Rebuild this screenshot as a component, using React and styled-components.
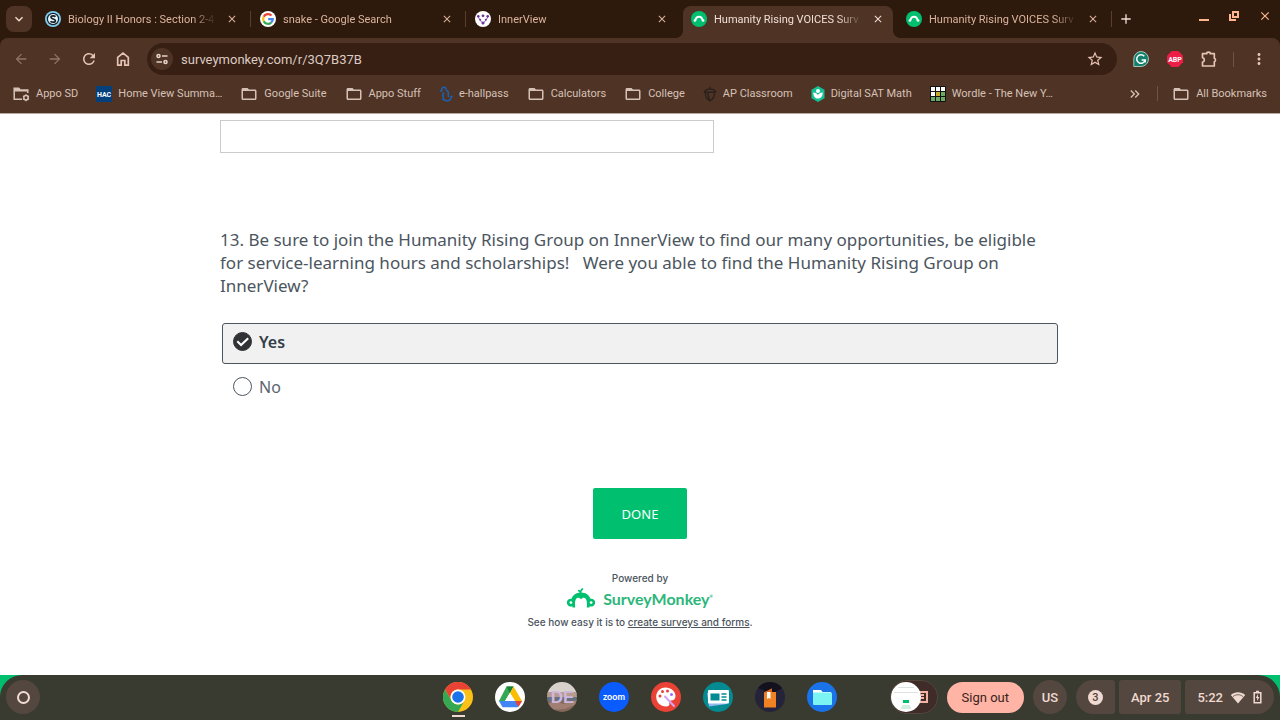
import React, { useState } from 'react';
import styled, { createGlobalStyle, css } from 'styled-components';
import {
  MdArrowBack,
  MdArrowForward,
  MdRefresh,
  MdStarBorder,
  MdMoreVert,
  MdAdd,
  MdClose,
  MdFolderOpen,
  MdKeyboardArrowDown,
  MdKeyboardDoubleArrowRight,
} from 'react-icons/md';

const tabs = [
  { id: 'bio', title: 'Biology II Honors : Section 2-4', icon: SchoologyIcon },
  { id: 'snake', title: 'snake - Google Search', icon: GoogleIcon },
  { id: 'inner', title: 'InnerView', icon: InnerViewIcon },
  { id: 'survey1', title: 'Humanity Rising VOICES Surv', icon: SurveyIcon },
  { id: 'survey2', title: 'Humanity Rising VOICES Surv', icon: SurveyIcon },
];

const bookmarks = [
  { title: 'Appo SD', icon: ManagedFolderIcon },
  { title: 'Home View Summa…', icon: HacIcon },
  { title: 'Google Suite', icon: MdFolderOpen },
  { title: 'Appo Stuff', icon: MdFolderOpen },
  { title: 'e-hallpass', icon: HallpassIcon },
  { title: 'Calculators', icon: MdFolderOpen },
  { title: 'College', icon: MdFolderOpen },
  { title: 'AP Classroom', icon: AcornIcon },
  { title: 'Digital SAT Math', icon: KhanIcon },
  { title: 'Wordle - The New Y…', icon: WordleIcon },
];

const shelfApps = [
  { name: 'Chrome', icon: ChromeApp, running: true },
  { name: 'Drive', icon: DriveApp },
  { name: 'Desmos', icon: DeApp },
  { name: 'Zoom', icon: ZoomApp },
  { name: 'Canvas', icon: PaintApp },
  { name: 'News', icon: NewsApp },
  { name: 'Reader', icon: BookApp },
  { name: 'Files', icon: FilesApp },
];

/* ---------- favicons ---------- */

function SchoologyIcon() {
  return (
    <svg width="16" height="16" viewBox="0 0 16 16">
      <circle cx="8" cy="8" r="8" fill="#7fcdee" />
      <circle cx="8" cy="8" r="6.2" fill="#16222b" />
      <circle cx="8" cy="8" r="5" fill="#e9f6fc" />
      <path d="M10.4 5.700C9.800 4.700 6 4.400 6 6.300c0 2 4.400 1.300 4.400 3.400 0 2-4 1.800-4.800.4" fill="none" stroke="#16222b" strokeWidth="1.700" />
    </svg>
  );
}

function GoogleIcon() {
  return (
    <svg width="16" height="16" viewBox="0 0 16 16">
      <circle cx="8" cy="8" r="8" fill="#fff" />
      <g fill="none" strokeWidth="2.200">
        <path d="M11.500 4.600A4.800 4.800 0 0 0 3.700 5.800" stroke="#ea4335" />
        <path d="M3.700 5.800a4.800 4.800 0 0 0 0 4.400" stroke="#fbbc05" />
        <path d="M3.700 10.200a4.800 4.800 0 0 0 7.500 1.400" stroke="#34a853" />
        <path d="M11.200 11.600A4.600 4.600 0 0 0 12.800 8.100H8.200" stroke="#4285f4" />
      </g>
    </svg>
  );
}

function InnerViewIcon() {
  return (
    <svg width="16" height="16" viewBox="0 0 16 16">
      <circle cx="8" cy="8" r="8" fill="#fff" />
      <path d="M3.300 5.600c0 2.500 2 2.300 2.300 3.600M12.700 5.600c0 2.500-2 2.300-2.300 3.600M5 9.300l3 3 3-3" fill="none" stroke="#8a55ba" strokeWidth="1" />
      <g fill="#6b2fa0">
        <circle cx="8" cy="4.800" r="1.400" />
        <circle cx="3.300" cy="5.300" r="1.300" />
        <circle cx="12.700" cy="5.300" r="1.300" />
        <circle cx="5.200" cy="8.700" r="1" />
        <circle cx="10.800" cy="8.700" r="1" />
        <circle cx="8" cy="12" r="1.500" />
      </g>
    </svg>
  );
}

function SurveyIcon() {
  return (
    <svg width="16" height="16" viewBox="0 0 16 16">
      <circle cx="8" cy="8" r="8" fill="#00bf6f" />
      <path d="M4.500 9.500C4.700 6.800 6.200 5.700 8 5.700s3.300 1.100 3.500 3.800" fill="none" stroke="#fff" strokeWidth="2" />
      <circle cx="3.900" cy="9.500" r="1.300" fill="#fff" />
      <circle cx="12.100" cy="9.500" r="1.300" fill="#fff" />
    </svg>
  );
}

function ManagedFolderIcon() {
  return (
    <svg width="17" height="16" viewBox="0 0 17 16">
      <path d="M9 13.200H1.200V2.200h4.500l1.500 1.800h7.600v3" fill="none" stroke="currentColor" strokeWidth="1.500" />
      <path d="M1 2h5l1.500 2H15v1.500H1z" fill="currentColor" />
      <circle cx="13" cy="11.700" r="2.200" fill="none" stroke="currentColor" strokeWidth="1.500" />
      <path d="M13 8.200v1.500M13 13.700v1.500M10 10l1.300.7M14.700 12.700l1.300.7M16 10l-1.300.7M11.300 12.700l-1.300.7" stroke="currentColor" strokeWidth="1.200" />
    </svg>
  );
}

function HacIcon() {
  return (
    <svg width="16" height="16" viewBox="0 0 16 16">
      <rect width="16" height="16" rx="1" fill="#04407c" />
      <text x="8" y="10.500" fill="#fff" fontFamily="Roboto, sans-serif" fontSize="7" fontWeight="700" textAnchor="middle">HAC</text>
    </svg>
  );
}

function HallpassIcon() {
  return (
    <svg width="14" height="16" viewBox="0 0 14 16">
      <path d="M.8 5h2.400M3 5C2.200 2.500 3.500 1.200 5 1.200c1.700 0 2.500 1.500 2 3M5 6.500c-1.500 1.500-1.500 3-.8 4.500.5 1.200-.2 2-.2 2 1 1.500 2.500 1.800 4.500 1.700M7 4.200c2 1 3 2.300 2.300 4-.5 1.300-.2 2.300.7 3M8.500 14.700c2.500 0 4-1.700 3.500-4.200M13.600 10.500h-2.200" fill="none" stroke="#1b62b5" strokeWidth="1.500" />
    </svg>
  );
}

function AcornIcon() {
  return (
    <svg width="14" height="16" viewBox="0 0 14 16">
      <path d="M7 3V.8M1 6.200C2.500 3.200 5 3 7 3s4.500.2 6 3.200M1 6.200h12M2.500 6.500C2.200 11 4.500 13.500 7 15c2.500-1.500 4.800-4 4.500-8.500M5 6.500c0 3 .5 5 2 7.500" fill="none" stroke="#2b211c" strokeWidth="1.400" />
    </svg>
  );
}

function KhanIcon() {
  return (
    <svg width="14" height="16" viewBox="0 0 14 16">
      <path d="M7 0l6.500 3.700v8.600L7 16 .5 12.300V3.700z" fill="#14bf96" />
      <circle cx="7" cy="5" r="2" fill="#fff" />
      <path d="M2.300 6.500C5 6.500 7 8 7 9.500c0-1.500 2-3 4.700-3 0 4-2 6-4.700 6s-4.700-2-4.700-6z" fill="#fff" />
    </svg>
  );
}

function WordleIcon() {
  const cells = ['#fff', '#fff', '#fff', '#fff', '#c9a92c', '#6aaa64', '#6aaa64', '#6aaa64', '#6aaa64'];
  return (
    <svg width="16" height="16" viewBox="0 0 16 16">
      <rect width="16" height="16" rx="1" fill="#121213" />
      {cells.map((fill, i) => (
        <rect key={i} x={1 + (i % 3) * 5} y={1 + Math.floor(i / 3) * 5} width="4" height="4" fill={fill} />
      ))}
    </svg>
  );
}

/* ---------- toolbar icons ---------- */

function HomeIcon() {
  return (
    <svg width="16" height="16" viewBox="0 0 16 16" fill="none" stroke="currentColor" strokeWidth="1.700">
      <path d="M2.700 14.200V6.300L8 2l5.300 4.300v7.900H9.800V9.500H6.200v4.700z" />
    </svg>
  );
}

function TuneIcon() {
  return (
    <svg width="14" height="14" viewBox="0 0 14 14" fill="none" stroke="currentColor" strokeWidth="1.600">
      <circle cx="3.500" cy="4" r="1.500" />
      <path d="M7 4h5.500M1.500 10h5.500" />
      <circle cx="10.500" cy="10" r="1.500" />
    </svg>
  );
}

function GrammarlyIcon() {
  return (
    <svg width="16" height="16" viewBox="0 0 16 16">
      <path d="M8 .5a7.500 7.500 0 1 1 0 15H.8V8A7.400 7.400 0 0 1 8 .5z" fill="#12806a" stroke="#c8dcd5" strokeWidth=".8" />
      <path d="M11.300 5.200A4.300 4.300 0 1 0 12.200 9H8.600M12.200 8.800v2.600" fill="none" stroke="#fff" strokeWidth="1.500" />
    </svg>
  );
}

function AbpIcon() {
  return (
    <svg width="16" height="16" viewBox="0 0 16 16">
      <path d="M4.700 0h6.600L16 4.700v6.600L11.300 16H4.700L0 11.300V4.700z" fill="#ed1e45" />
      <text x="8" y="10.600" fill="#fff" fontFamily="Roboto, sans-serif" fontSize="7" fontWeight="700" textAnchor="middle">ABP</text>
    </svg>
  );
}

function PuzzleIcon() {
  return (
    <svg width="18" height="18" viewBox="0 0 18 18">
      <path d="M2.500 3.700h4.200a1.800 1.500 0 0 1 3.600 0h4v4.600a1.800 1.800 0 0 1 0 3.400v4.300H2.500v-3.800a2.300 2.300 0 0 0 0-4.500z" fill="none" stroke="currentColor" strokeWidth="1.700" strokeLinejoin="round" />
    </svg>
  );
}

function RestoreIcon() {
  return (
    <svg width="12" height="12" viewBox="0 0 12 12" fill="none" stroke="currentColor" strokeWidth="2">
      <path d="M5 2h5v5H5z" />
      <path d="M2 4v6h6" />
    </svg>
  );
}

function MinimizeIcon() {
  return (
    <svg width="12" height="12" viewBox="0 0 12 12">
      <path d="M1 10h10" stroke="currentColor" strokeWidth="2" />
    </svg>
  );
}

/* ---------- shelf app icons ---------- */

function ChromeApp() {
  return (
    <svg width="30" height="30" viewBox="0 0 30 30">
      <circle cx="15" cy="15" r="15" fill="#fbc116" />
      <path d="M2 7.500A15 15 0 0 1 28 7.500H15A7.500 7.500 0 0 0 8.500 18.800z" fill="#ea4335" />
      <path d="M2 7.500L8.500 18.800A7.500 7.500 0 0 0 21.500 18.800L15 30A15 15 0 0 1 2 7.500z" fill="#34a853" />
      <circle cx="15" cy="15" r="7.500" fill="#fff" />
      <circle cx="15" cy="15" r="5.800" fill="#1a73e8" />
    </svg>
  );
}

function DriveApp() {
  return (
    <svg width="30" height="30" viewBox="0 0 30 30">
      <circle cx="15" cy="15" r="15" fill="#fff" />
      <path d="M11.500 4.500h7l-10.500 18L4 19z" fill="#34a853" />
      <path d="M11.500 4.500h7L15 11z" fill="#188038" />
      <path d="M18.500 4.500L27 19h-7l-5-8z" fill="#fbbc04" />
      <path d="M4 19h15l-3.500 6.200H7.500z" fill="#4285f4" />
      <path d="M20 19h7l-3.500 5-1 1.200h-7L8 19z" fill="#4285f4" />
      <path d="M20 19h7l-3.500 6z" fill="#ea4335" />
      <path d="M15 11l5 8H10z" fill="#fff" />
    </svg>
  );
}

function DeApp() {
  return (
    <svg width="30" height="30" viewBox="0 0 30 30">
      <clipPath id="deClip"><circle cx="15" cy="15" r="15" /></clipPath>
      <g clipPath="url(#deClip)">
        <rect width="30" height="12" fill="#d9d2cc" />
        <rect y="10" width="30" height="5" fill="#b99a90" />
        <rect y="15" width="30" height="4" fill="#676f80" />
        <rect y="19" width="30" height="11" fill="#85695b" />
        <path d="M0 22l9-3 7 3 14-4v4l-12 5-18 1z" fill="#a07f72" />
      </g>
      <text x="15.500" y="21" fill="#cdb8dc" fontFamily="Liberation Sans, sans-serif" fontSize="17" fontWeight="700" textAnchor="middle">DE</text>
    </svg>
  );
}

function ZoomApp() {
  return (
    <svg width="30" height="30" viewBox="0 0 30 30">
      <circle cx="15" cy="15" r="15" fill="#0b5cff" />
      <text x="15" y="17.500" fill="#fff" fontFamily="Lato, sans-serif" fontSize="9" fontWeight="700" textAnchor="middle">zoom</text>
    </svg>
  );
}

function PaintApp() {
  return (
    <svg width="30" height="30" viewBox="0 0 30 30">
      <circle cx="15" cy="15" r="15" fill="#ea4335" />
      <path d="M14.500 5.500c5.500 0 10 3.800 10 8.500 0 3-2 4.500-4.500 4.500-2 0-2.500 1-1.800 2.500.8 2-.5 3.500-3 3.500-6 0-10-4.500-10-9.800 0-5 4-9.200 9.300-9.200z" fill="#fff" />
      <circle cx="9" cy="14" r="1.500" fill="#ea4335" />
      <circle cx="11.500" cy="9.500" r="1.500" fill="#ea4335" />
      <circle cx="16.500" cy="9" r="1.500" fill="#ea4335" />
      <circle cx="20.500" cy="12.500" r="1.500" fill="#a06bf0" />
      <path d="M14 14.500l9 9.500" stroke="#d9a3f5" strokeWidth="2" strokeLinecap="round" />
    </svg>
  );
}

function NewsApp() {
  return (
    <svg width="30" height="30" viewBox="0 0 30 30">
      <circle cx="15" cy="15" r="15" fill="#048a91" />
      <path d="M4 11l20-2v13L6 24.500z" fill="#90b8ee" />
      <rect x="5" y="8" width="21" height="13.500" rx="1" fill="#fff" />
      <rect x="7.500" y="11.500" width="9" height="7" fill="#048a91" />
      <path d="M18.500 12h5M18.500 15h5M18.500 18h5" stroke="#048a91" strokeWidth="1.500" />
    </svg>
  );
}

function BookApp() {
  return (
    <svg width="30" height="30" viewBox="0 0 30 30">
      <circle cx="15" cy="15" r="15" fill="#25233a" />
      <path d="M3 6A15 15 0 0 1 27 6L17 12z" fill="#12111d" />
      <path d="M9 10.500l8-4V10h4v15.500H9z" fill="#f08223" />
      <path d="M9 10.500l8-4V10z" fill="#d9621a" />
      <path d="M12 10h3.500v7l-1.700-1-1.800 1z" fill="#fff" />
    </svg>
  );
}

function FilesApp() {
  return (
    <svg width="30" height="30" viewBox="0 0 30 30">
      <circle cx="15" cy="15" r="15" fill="#1a73e8" />
      <path d="M6 8h8l1.500 2H24v3H6z" fill="#fff" />
      <rect x="6" y="10.500" width="19" height="12.500" rx="1" fill="#7df4f4" />
    </svg>
  );
}

function SurveyMonkeyMark() {
  return (
    <svg width="28" height="20" viewBox="0 0 28 20">
      <path
        fill="#00bf6f"
        d="M14 4.500C9 4.500 5.800 7.300 4.500 10.800A3.900 3.900 0 1 0 5.300 18.200L5.600 19.500H8.200C7.600 14.800 8.200 9.800 11 9.800c1.500 0 2.300.7 3 1.500.7-.8 1.500-1.500 3-1.500 2.800 0 3.400 5 2.800 9.700h2.600l.3-1.300A3.900 3.900 0 1 0 23.500 10.800C22.200 7.300 19 4.500 14 4.500z"
      />
      <circle cx="3.900" cy="14.600" r="1.400" fill="#fff" />
      <circle cx="24.100" cy="14.600" r="1.400" fill="#fff" />
      <path d="M11 2.500c1.500 0 2.200 1 2.500 2.500C13.500 3 14.500 1.500 16 .8" fill="none" stroke="#00bf6f" strokeWidth="1.600" />
    </svg>
  );
}

function WindowPreview() {
  return (
    <svg width="48" height="34" viewBox="0 0 48 34">
      <rect x=".5" y=".5" width="47" height="33" rx="16.500" fill="#3f2b27" stroke="#54453d" />
      <path d="M28 12h9v10h-9M31 15h3M31 18h3" fill="none" stroke="#f3b3a4" strokeWidth="2" />
      <circle cx="16" cy="17" r="15" fill="#fff" />
      <path d="M8 7.500h16M4 12.500h24" stroke="#dfe1e3" strokeWidth="1" />
      <rect x="13" y="20" width="6" height="3" fill="#00bf6f" />
      <path d="M12 26h8M11 28h10" stroke="#a5dcc3" strokeWidth="1" />
    </svg>
  );
}

function WifiIcon() {
  return (
    <svg width="16" height="13" viewBox="0 0 16 13">
      <path d="M8 12.500L.8 4C4.800.3 11.200.3 15.200 4z" fill="currentColor" />
      <path d="M3 5.600c3-2.500 7-2.500 10 0" fill="none" stroke="#54473f" strokeWidth=".8" />
    </svg>
  );
}

function BatteryIcon() {
  return (
    <svg width="9" height="14" viewBox="0 0 9 14">
      <path d="M3 1.500h3M1.200 2.700h6.600v10H1.200z" fill="none" stroke="currentColor" strokeWidth="1.500" />
      <path d="M5 4L2.800 8h1.400v3l2.200-4H5z" fill="currentColor" />
    </svg>
  );
}

function App() {
  const [activeTab, setActiveTab] = useState('survey1');
  const [answer, setAnswer] = useState('yes');
  const [comment, setComment] = useState('');
  const activeIndex = tabs.findIndex((tab) => tab.id === activeTab);

  return (
    <Screen>
      <GlobalStyle />
      <Browser>
        <TabStrip>
          <TabSearch aria-label="Search tabs"><MdKeyboardArrowDown size={16} /></TabSearch>
          <TabList>
            {tabs.map((tab, i) => {
              const active = i === activeIndex;
              return (
                <Tab key={tab.id} $active={active} $divider={!active && i + 1 !== activeIndex}>
                  <TabLabel $active={active} onClick={() => setActiveTab(tab.id)}>
                    <tab.icon />
                    <TabTitle>{tab.title}</TabTitle>
                  </TabLabel>
                  <TabClose $active={active} aria-label="Close tab"><MdClose size={12} /></TabClose>
                </Tab>
              );
            })}
          </TabList>
          <NewTab aria-label="New tab"><MdAdd size={16} /></NewTab>
          <WindowControls>
            <WindowButton aria-label="Minimize"><MinimizeIcon /></WindowButton>
            <WindowButton aria-label="Restore"><RestoreIcon /></WindowButton>
            <WindowButton aria-label="Close"><MdClose size={14} /></WindowButton>
          </WindowControls>
        </TabStrip>

        <Chrome>
          <Toolbar>
            <NavButtons>
              <IconButton $dim aria-label="Back"><MdArrowBack size={16} /></IconButton>
              <IconButton $dim aria-label="Forward"><MdArrowForward size={16} /></IconButton>
              <IconButton aria-label="Reload"><MdRefresh size={18} /></IconButton>
              <IconButton aria-label="Home"><HomeIcon /></IconButton>
            </NavButtons>
            <Omnibox>
              <SiteInfo aria-label="View site information"><TuneIcon /></SiteInfo>
              <Address aria-label="Address" defaultValue="surveymonkey.com/r/3Q7B37B" />
              <IconButton aria-label="Bookmark this page"><MdStarBorder size={18} /></IconButton>
            </Omnibox>
            <Extensions>
              <IconButton aria-label="Grammarly"><GrammarlyIcon /></IconButton>
              <IconButton aria-label="Adblock Plus"><AbpIcon /></IconButton>
              <IconButton aria-label="Extensions"><PuzzleIcon /></IconButton>
            </Extensions>
            <Divider />
            <IconButton aria-label="Menu"><MdMoreVert size={18} /></IconButton>
          </Toolbar>
          <BookmarkBar>
            {bookmarks.map((item) => (
              <Bookmark key={item.title} href="#">
                <item.icon size={18} />
                {item.title}
              </Bookmark>
            ))}
            <BookmarkEnd>
              <MdKeyboardDoubleArrowRight size={16} />
              <Divider />
              <Bookmark href="#"><MdFolderOpen size={18} />All Bookmarks</Bookmark>
            </BookmarkEnd>
          </BookmarkBar>
        </Chrome>
      </Browser>

      <Page>
        <Survey onSubmit={(e) => e.preventDefault()}>
          <TextBox aria-label="Answer" value={comment} onChange={(e) => setComment(e.target.value)} />
          <Question>
            <QuestionTitle>
              13. Be sure to join the Humanity Rising Group on InnerView to find our many opportunities, be eligible
              for service-learning hours and scholarships! &nbsp; Were you able to find the Humanity Rising Group on
              InnerView?
            </QuestionTitle>
            {['yes', 'no'].map((value) => (
              <Choice key={value} $checked={answer === value}>
                <RadioBox>
                  <Radio type="radio" name="joined" checked={answer === value} onChange={() => setAnswer(value)} />
                  {answer === value && (
                    <CheckMark viewBox="0 0 20 20">
                      <path d="M4.500 9.800l4 4L16 6.500" fill="none" stroke="#fff" strokeWidth="2.200" />
                    </CheckMark>
                  )}
                </RadioBox>
                {value === 'yes' ? 'Yes' : 'No'}
              </Choice>
            ))}
          </Question>
          <DoneButton type="submit">DONE</DoneButton>
        </Survey>
        <Footer>
          <FooterText>Powered by</FooterText>
          <Brand href="#">
            <SurveyMonkeyMark />
            <BrandName>SurveyMonkey<Registered>®</Registered></BrandName>
          </Brand>
          <FooterText>See how easy it is to <a href="#">create surveys and forms</a>.</FooterText>
        </Footer>
      </Page>

      <ShelfEdge>
        <Shelf>
          <Launcher aria-label="Launcher"><LauncherRing /></Launcher>
          <Apps>
            {shelfApps.map((app) => (
              <AppButton key={app.name} $running={app.running} aria-label={app.name}><app.icon /></AppButton>
            ))}
          </Apps>
          <Status>
            <WindowPreview />
            <SignOut>Sign out</SignOut>
            <Keyboard>US</Keyboard>
            <Tray>
              <TrayButton $side="left"><Count>3</Count></TrayButton>
              <TrayButton>Apr 25</TrayButton>
              <TrayButton $side="right">5:22<WifiIcon /><BatteryIcon /></TrayButton>
            </Tray>
          </Status>
        </Shelf>
      </ShelfEdge>
    </Screen>
  );
}

export default App;

const GlobalStyle = createGlobalStyle`
  * { box-sizing: border-box; }
  body { margin: 0; background: #fff; }
  button, input { font: inherit; color: inherit; }
  button { border: 0; padding: 0; background: none; cursor: pointer; }
  svg { flex: none; display: block; }
`;

const Screen = styled.div`
  min-height: 100vh;
  display: flex;
  flex-direction: column;
  font-family: Roboto, sans-serif;
`;

const Browser = styled.header`
  background: #2e1a0d;
  border-bottom: 1px solid #b5aaa3;
  font-size: 11px;
`;

const TabStrip = styled.div`
  display: flex;
  align-items: center;
  height: 38px;
  padding: 0 8px 0 6px;
  color: #dcb49e;
`;

const TabSearch = styled.button`
  display: grid;
  place-items: center;
  width: 26px;
  height: 26px;
  border-radius: 8px;
  background: #4f3426;
  color: #f3ddd2;
`;

const TabList = styled.div`
  flex: 1;
  display: flex;
  align-self: stretch;
  min-width: 0;
  margin-left: 4px;
  padding-top: 6px;
`;

const Tab = styled.div`
  position: relative;
  flex: 1;
  display: flex;
  align-items: center;
  min-width: 0;
  height: 32px;
  padding: 0 13px 6px 9px;
  border-radius: 8px 8px 0 0;
  ${(props) => props.$divider && css`
    &::after {
      content: '';
      position: absolute;
      right: 0;
      top: 5px;
      width: 1px;
      height: 16px;
      background: #5a3d2e;
    }
  `}
  ${(props) => props.$active && css`
    margin: 0 4px 0 2px;
    padding-left: 8px;
    padding-right: 9px;
    background: #4f3426;
    &::before, &::after {
      content: '';
      position: absolute;
      bottom: 0;
      width: 8px;
      height: 8px;
    }
    &::before {
      left: -8px;
      background: radial-gradient(circle at 0 0, transparent 8px, #4f3426 8px);
    }
    &::after {
      right: -8px;
      background: radial-gradient(circle at 100% 0, transparent 8px, #4f3426 8px);
    }
  `}
`;

const TabLabel = styled.button`
  flex: 1;
  display: flex;
  align-items: center;
  gap: 7px;
  min-width: 0;
  color: ${(props) => (props.$active ? '#f0dfd6' : '#dcb49e')};
`;

const TabTitle = styled.span`
  flex: 1;
  overflow: hidden;
  white-space: nowrap;
  text-align: left;
  mask-image: linear-gradient(to right, #000 calc(100% - 24px), transparent);
`;

const TabClose = styled.button`
  margin-left: 10px;
  color: ${(props) => (props.$active ? '#f0dfd6' : '#dcb49e')};
`;

const NewTab = styled.button`
  width: 28px;
  display: grid;
  place-items: center;
  color: #f0dfd6;
`;

const WindowControls = styled.div`
  display: flex;
  gap: 18px;
  margin-left: 58px;
  padding-bottom: 6px;
  color: #ffb68f;
`;

const WindowButton = styled.button`
  display: grid;
  place-items: center;
`;

const Chrome = styled.div`
  background: #4f3426;
  border-radius: 8px 8px 0 0;
  padding-top: 5px;
`;

const Toolbar = styled.div`
  display: flex;
  align-items: center;
  height: 32px;
  padding: 0 8px;
`;

const NavButtons = styled.div`
  display: flex;
  gap: 8px;
  margin-right: 11px;
`;

const IconButton = styled.button`
  display: grid;
  place-items: center;
  width: 26px;
  height: 26px;
  color: ${(props) => (props.$dim ? '#8d7467' : '#e6c3b2')};
`;

const Omnibox = styled.div`
  flex: 1;
  display: flex;
  align-items: center;
  height: 32px;
  padding: 0 9px 0 4px;
  border-radius: 16px;
  background: #371f13;
`;

const SiteInfo = styled.button`
  display: grid;
  place-items: center;
  width: 22px;
  height: 22px;
  border-radius: 50%;
  background: #4f3426;
  color: #e5d3c9;
`;

const Address = styled.input`
  flex: 1;
  min-width: 0;
  padding: 0 8px;
  border: 0;
  outline: 0;
  background: none;
  color: #dccbc2;
  font-size: 13px;
`;

const Extensions = styled.div`
  display: flex;
  gap: 8px;
  margin: 0 11px;
`;

const Divider = styled.span`
  width: 1px;
  height: 15px;
  margin-right: 12px;
  background: #6f5344;
`;

const BookmarkBar = styled.nav`
  display: flex;
  align-items: center;
  gap: 18px;
  height: 38px;
  padding: 0 13px 1px;
  color: #d6c1b6;
`;

const Bookmark = styled.a`
  display: flex;
  align-items: center;
  gap: 6px;
  color: inherit;
  text-decoration: none;
  white-space: nowrap;
`;

const BookmarkEnd = styled.div`
  display: flex;
  align-items: center;
  gap: 14px;
  margin-left: auto;
  ${Divider} {
    margin: 0;
  }
`;

const Page = styled.main`
  flex: 1;
  background: #fff;
  color: #4b5560;
  font-family: "Noto Sans", sans-serif;
`;

const Survey = styled.form`
  display: flex;
  flex-direction: column;
  align-items: flex-start;
  max-width: 880px;
  margin: 0 auto;
  padding: 6px 20px 0;
`;

const TextBox = styled.input`
  width: 100%;
  max-width: 494px;
  height: 33px;
  padding: 0 8px;
  border: 1px solid #c9cbcd;
`;

const Question = styled.fieldset`
  width: 100%;
  margin: 75px 0 0;
  padding: 0;
  border: 0;
`;

const QuestionTitle = styled.legend`
  padding: 0;
  margin-bottom: 26px;
  font-size: 17px;
  line-height: 23px;
`;

const Choice = styled.label`
  display: flex;
  align-items: center;
  gap: 7px;
  height: 41px;
  margin: 0 2px 4px;
  padding: 0 10px 4px;
  border: 1px solid ${(props) => (props.$checked ? '#4b5560' : 'transparent')};
  border-radius: 3px;
  background: ${(props) => (props.$checked ? '#f1f1f1' : 'transparent')};
  color: ${(props) => (props.$checked ? '#333e48' : '#5b646e')};
  font-size: 16px;
  font-weight: ${(props) => (props.$checked ? 600 : 400)};
`;

const RadioBox = styled.span`
  display: grid;
  width: 19px;
  height: 19px;
  > * {
    grid-area: 1 / 1;
  }
`;

const Radio = styled.input`
  appearance: none;
  width: 19px;
  height: 19px;
  margin: 0;
  border: 1px solid #4b5560;
  border-radius: 50%;
  background: #fff;
  &:checked {
    border-color: #303236;
    background: #303236;
  }
`;

const CheckMark = styled.svg`
  width: 19px;
  height: 19px;
  pointer-events: none;
`;

const DoneButton = styled.button`
  align-self: center;
  width: 94px;
  height: 51px;
  margin-top: 75px;
  border-radius: 2px;
  background: #00bf6f;
  color: #fff;
  font-size: 13px;
`;

const Footer = styled.footer`
  display: flex;
  flex-direction: column;
  align-items: center;
  padding-top: 31px;
`;

const FooterText = styled.p`
  margin: 0;
  font-family: Inter, sans-serif;
  font-size: 10px;
  line-height: 16px;
  font-weight: 500;
  color: #4b5560;
  a {
    color: inherit;
  }
`;

const Brand = styled.a`
  display: flex;
  align-items: center;
  gap: 8px;
  height: 28px;
  padding-bottom: 5px;
  color: #2cb67a;
  text-decoration: none;
`;

const BrandName = styled.span`
  display: flex;
  padding-top: 2px;
  font-family: Lato, sans-serif;
  font-size: 16px;
  line-height: 20px;
  font-weight: 700;
`;

const Registered = styled.span`
  font-size: 4px;
  line-height: 16px;
`;

const ShelfEdge = styled.div`
  background: #00bf6f;
`;

const Shelf = styled.footer`
  display: grid;
  grid-template-columns: 1fr auto 1fr;
  align-items: center;
  height: 45px;
  padding: 0 6px 1px;
  border-radius: 22px 22px 0 0;
  background: #393a30;
  color: #f0d9d0;
  font-size: 13px;
`;

const Launcher = styled.button`
  display: grid;
  place-items: center;
  width: 34px;
  height: 34px;
  border-radius: 50%;
  background: #54473f;
`;

const LauncherRing = styled.span`
  width: 13px;
  height: 13px;
  border: 2px solid #f3ddd5;
  border-radius: 50%;
`;

const Apps = styled.div`
  display: flex;
  gap: 22px;
`;

const AppButton = styled.button`
  position: relative;
  ${(props) => props.$running && css`
    &::after {
      content: '';
      position: absolute;
      left: 9px;
      bottom: -5px;
      width: 13px;
      height: 2px;
      background: #f0d9d0;
    }
  `}
`;

const Status = styled.div`
  display: flex;
  align-items: center;
  justify-content: flex-end;
  gap: 9px;
`;

const SignOut = styled.button`
  height: 31px;
  padding: 0 15px;
  border-radius: 16px;
  background: #ffb4a5;
  color: #3a2320;
  white-space: nowrap;
`;

const Keyboard = styled.button`
  width: 34px;
  height: 34px;
  border-radius: 50%;
  background: #54473f;
  font-weight: 500;
`;

const Tray = styled.div`
  display: flex;
  gap: 4px;
`;

const trayRadius = {
  left: '17px 3px 3px 17px',
  right: '3px 17px 17px 3px',
};

const TrayButton = styled.button`
  display: flex;
  align-items: center;
  gap: 7px;
  height: 34px;
  padding: 0 12px;
  border-radius: ${(props) => trayRadius[props.$side] || '3px'};
  background: #54473f;
  font-weight: 500;
  white-space: nowrap;
`;

const Count = styled.span`
  width: 15px;
  height: 15px;
  border-radius: 50%;
  background: #f0d9d0;
  color: #54473f;
  font-size: 11px;
  line-height: 15px;
`;
